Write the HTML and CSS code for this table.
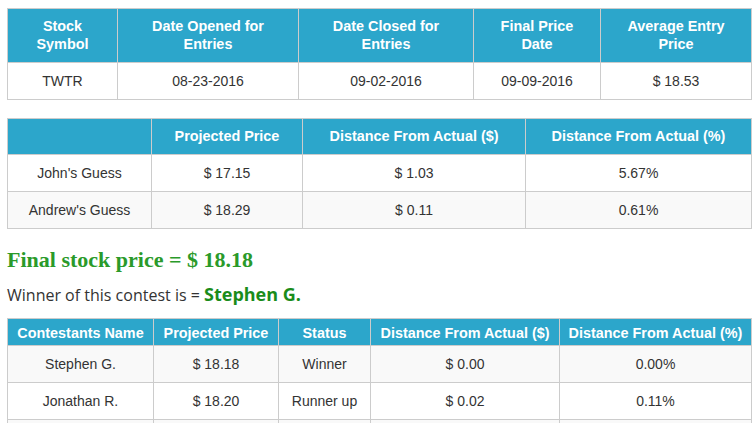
FILE: index.html
```html
<!DOCTYPE html>
<html>
<head>
<meta charset="utf-8">
<link rel="stylesheet" href="styles.css">
</head>
<body>
<div class="page">
  <table class="grid t1">
    <colgroup><col style="width:110px"><col style="width:181px"><col style="width:175px"><col style="width:127px"><col style="width:151px"></colgroup>
    <thead>
      <tr><th>Stock<br>Symbol</th><th>Date Opened for<br>Entries</th><th>Date Closed for<br>Entries</th><th>Final Price<br>Date</th><th>Average Entry<br>Price</th></tr>
    </thead>
    <tbody>
      <tr><td>TWTR</td><td>08-23-2016</td><td>09-02-2016</td><td>09-09-2016</td><td>$ 18.53</td></tr>
    </tbody>
  </table>

  <table class="grid t2">
    <colgroup><col style="width:144px"><col style="width:151px"><col style="width:223px"><col style="width:226px"></colgroup>
    <thead>
      <tr><th></th><th>Projected Price</th><th>Distance From Actual ($)</th><th>Distance From Actual (%)</th></tr>
    </thead>
    <tbody>
      <tr><td>John's Guess</td><td>$ 17.15</td><td>$ 1.03</td><td>5.67%</td></tr>
      <tr class="alt"><td>Andrew's Guess</td><td>$ 18.29</td><td>$ 0.11</td><td>0.61%</td></tr>
    </tbody>
  </table>

  <h2 class="final">Final stock price = $ 18.18</h2>
  <p class="winner">Winner of this contest is = <strong>Stephen G.</strong></p>

  <table class="grid t3">
    <colgroup><col style="width:146px"><col style="width:125px"><col style="width:92px"><col style="width:189px"><col style="width:192px"></colgroup>
    <thead>
      <tr><th>Contestants Name</th><th>Projected Price</th><th>Status</th><th>Distance From Actual ($)</th><th>Distance From Actual (%)</th></tr>
    </thead>
    <tbody>
      <tr class="alt"><td>Stephen G.</td><td>$ 18.18</td><td>Winner</td><td>$ 0.00</td><td>0.00%</td></tr>
      <tr><td>Jonathan R.</td><td>$ 18.20</td><td>Runner up</td><td>$ 0.02</td><td>0.11%</td></tr>
      <tr class="alt"><td>&nbsp;</td><td>&nbsp;</td><td>&nbsp;</td><td>&nbsp;</td><td>&nbsp;</td></tr>
    </tbody>
  </table>
</div>
</body>
</html>
```

FILE: styles.css
```css
html, body {
  margin: 0;
  padding: 0;
  background: #fff;
}
.page {
  padding: 8px 0 0 7px;
  width: 745px;
  font-family: "Liberation Sans", Arial, sans-serif;
  font-size: 14px;
  color: #333;
}
.grid {
  width: 745px;
  border-collapse: collapse;
  table-layout: fixed;
  border: 1px solid #ccc;
}
.grid th {
  background: #2ca6cb;
  color: #fff;
  font-weight: bold;
  font-size: 14.4px;
  line-height: 18px;
  padding: 8px 2px 9px;
  border: 1px solid #ccc;
  text-align: center;
}
.grid td {
  line-height: 18px;
  padding: 9px 4px;
  border: 1px solid #ccc;
  text-align: center;
  background: #fff;
}
.grid tr.alt td {
  background: #f9f9f9;
}
.t2 {
  margin-top: 18px;
}
.t3 {
  margin-top: 1px;
}
.t3 th {
  padding: 5px 2px 3px;
}
.final {
  font-family: "Liberation Serif", "Times New Roman", serif;
  font-size: 22px;
  font-weight: bold;
  color: #2a9a2a;
  margin: 18px 0 0;
  line-height: 26px;
}
.winner {
  font-family: "Open Sans", sans-serif;
  font-size: 16px;
  margin: 10px 0 12px;
  line-height: 22px;
}
.winner strong {
  color: #1a8c1a;
  font-size: 18px;
  font-weight: bold;
}
```
